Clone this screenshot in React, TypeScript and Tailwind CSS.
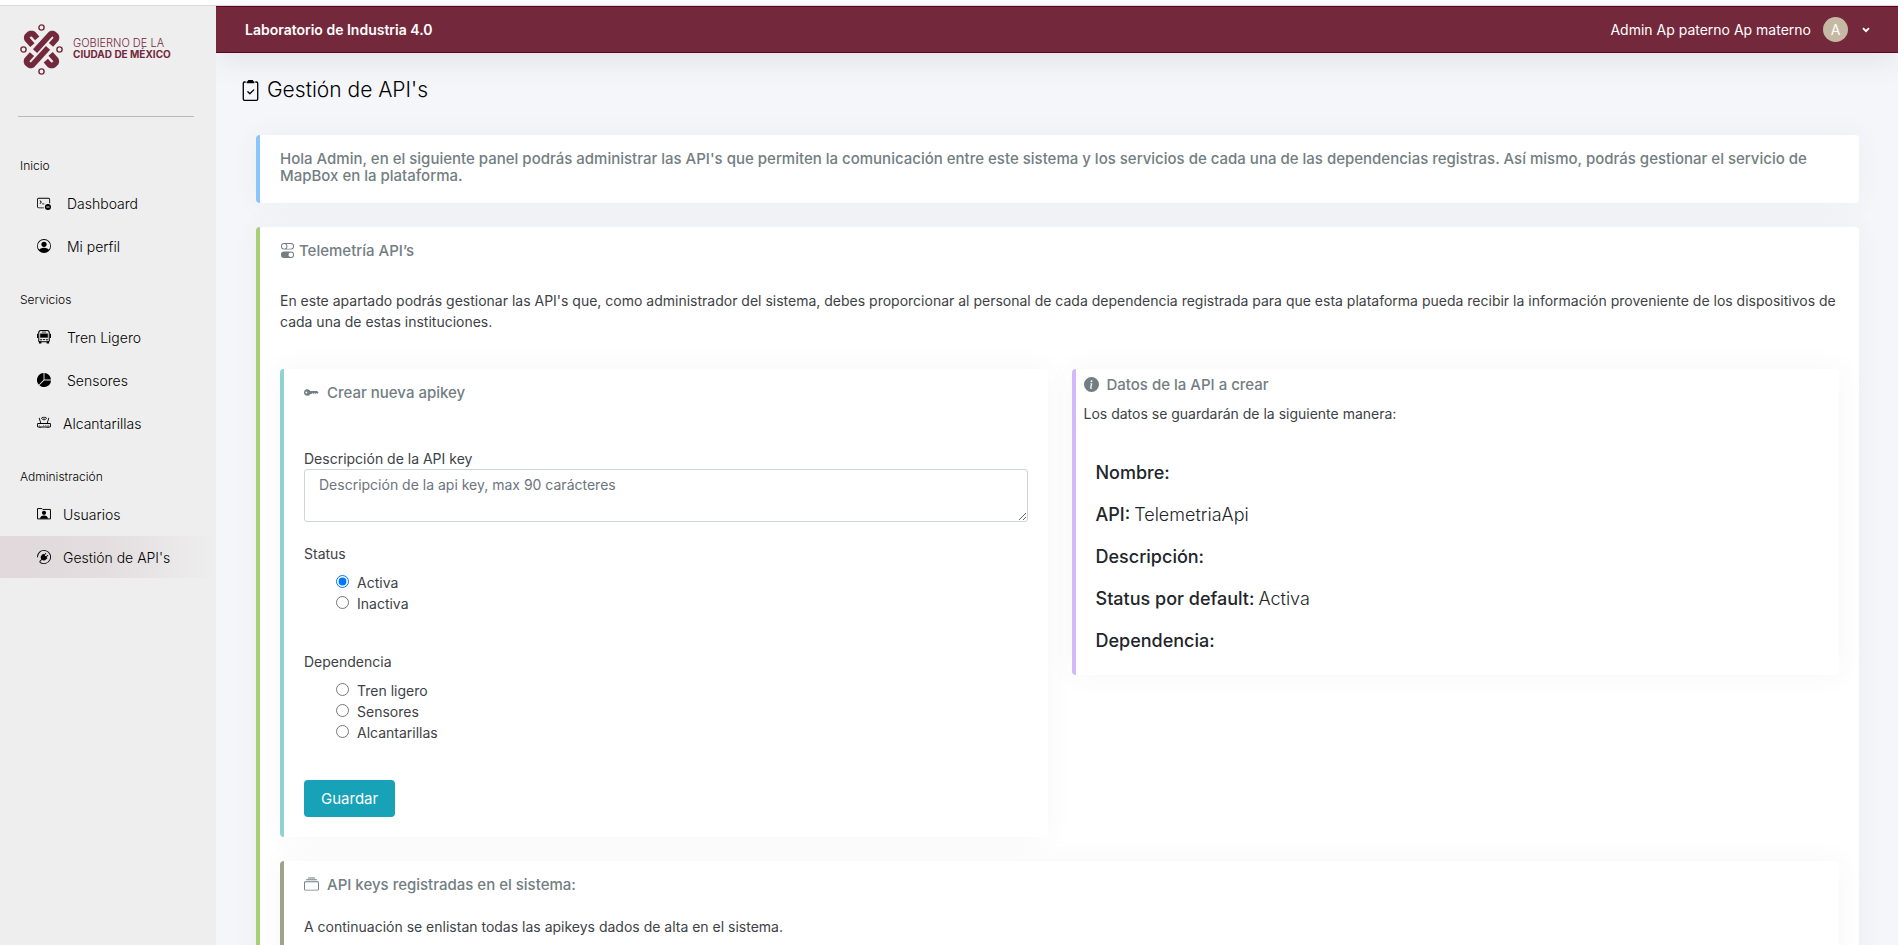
import { useState } from "react";
import type { ComponentType, ReactNode } from "react";
import {
  BsClipboard2Check,
  BsCollection,
  BsInfoCircleFill,
  BsKeyFill,
  BsPersonCircle,
  BsPieChartFill,
  BsPlugin,
  BsRouter,
  BsTerminalDash,
  BsToggles,
} from "react-icons/bs";

type IconProps = { className?: string };
type Icon = ComponentType<IconProps>;
type NavItem = { label: string; icon: Icon; active?: boolean; tight?: boolean };
type NavGroup = { title: string; items: NavItem[] };

function TrainIcon({ className }: IconProps) {
  return (
    <svg viewBox="0 0 16 16" className={className} fill="currentColor" aria-hidden="true">
      <path
        d="M4.5 0.6 H11.5 Q14 0.8 14 3 V12.4 Q14 13.4 13 13.4 H3 Q2 13.4 2 12.4 V3 Q2 0.8 4.5 0.6 Z"
        fill="none"
        stroke="currentColor"
        strokeWidth="1.2"
      />
      <path d="M3.6 4 H12.4 V8.8 H3.6 Z" />
      <path d="M5.5 1.9 H10.5 V2.8 H5.5 Z" />
      <circle cx="4.6" cy="11" r="0.9" />
      <circle cx="11.4" cy="11" r="0.9" />
      <path d="M6.6 10.5 H9.4 V11.5 H6.6 Z" />
      <path d="M0 4.4 H1.2 V9 H0 Z M14.8 4.4 H16 V9 H14.8 Z" />
      <path d="M2.2 13.2 H5 V15.4 H2.2 Z M11 13.2 H13.8 V15.4 H11 Z" />
    </svg>
  );
}

function UserFolderIcon({ className }: IconProps) {
  return (
    <svg viewBox="0 0 16 16" className={className} fill="currentColor" aria-hidden="true">
      <path d="M0.6 13.6 V1.8 H5.6 L6.6 2.8 H15.4 V13.6 Z" fill="none" stroke="currentColor" strokeWidth="1.1" />
      <circle cx="8" cy="6.6" r="2.4" />
      <path d="M3.4 13.4 Q4 9.8 8 9.8 Q12 9.8 12.6 13.4 Z" />
    </svg>
  );
}

const groups: NavGroup[] = [
  {
    title: "Inicio",
    items: [
      { label: "Dashboard", icon: BsTerminalDash },
      { label: "Mi perfil", icon: BsPersonCircle },
    ],
  },
  {
    title: "Servicios",
    items: [
      { label: "Tren Ligero", icon: TrainIcon },
      { label: "Sensores", icon: BsPieChartFill },
      { label: "Alcantarillas", icon: BsRouter, tight: true },
    ],
  },
  {
    title: "Administración",
    items: [
      { label: "Usuarios", icon: UserFolderIcon, tight: true },
      { label: "Gestión de API's", icon: BsPlugin, active: true, tight: true },
    ],
  },
];

function Emblem() {
  return (
    <svg viewBox="0 0 43 51" className="h-[51px] w-[43px] shrink-0" aria-hidden="true">
      <g fill="none" stroke="#74283b" strokeWidth="1.4">
        <circle cx="21.5" cy="3.5" r="2.6" />
        <circle cx="21.5" cy="47.5" r="2.6" />
        <circle cx="3.5" cy="25.5" r="2.6" />
        <circle cx="39.5" cy="25.5" r="2.6" />
      </g>
      <g fill="none" stroke="#74283b" strokeWidth="5.7" strokeLinejoin="bevel">
        <path d="M12.4 21.2 L6.8 14.8 V12.6 L9.6 9.7 H13 L17.2 14.4" />
        <path d="M31 20.8 L36.4 14.8 V12.4 L33.6 9.7 H31 L15 27.2" />
        <path d="M30.6 29.8 L36.2 36.2 V38.4 L33.4 41.3 H30 L25.8 36.6" />
        <path d="M12 30.2 L6.6 36.2 V38.6 L9.4 41.3 H12 L28 23.8" />
      </g>
    </svg>
  );
}

function Sidebar() {
  return (
    <aside className="relative z-10 w-[216px] shrink-0 bg-[#eeeeee] pt-[18px] text-black">
      <a href="#inicio" className="flex items-center gap-2.5 pl-5 text-[#74283b]">
        <Emblem />
        <span className="flex flex-col pb-px text-[10px] leading-[11px]">
          <span className="text-[11px] font-light">GOBIERNO DE LA</span>
          <span className="font-bold">CIUDAD DE MÉXICO</span>
        </span>
      </a>
      <hr className="mt-[41px] mr-[22px] ml-[18px] border-t border-[#b9babc]" />
      <nav className="pt-10">
        {groups.map((g) => (
          <section key={g.title} className="mb-6">
            <h2 className="pl-5 text-[12px] leading-[18px]">{g.title}</h2>
            <ul className="pt-[7px]">
              {g.items.map(({ label, icon: Icon, active, tight }) => (
                <li key={label}>
                  <a
                    href={"#" + label}
                    className={
                      "flex h-[42px] items-center pl-[37px] text-[14px] leading-[21px] " +
                      (tight ? "gap-3 " : "gap-4 ") +
                      (active ? "bg-linear-to-r from-[#e0d8da] via-[#e4dee0] to-[#eeeeee]" : "mb-px")
                    }
                  >
                    <Icon className="size-[14px]" />
                    {label}
                  </a>
                </li>
              ))}
            </ul>
          </section>
        ))}
      </nav>
    </aside>
  );
}

function Header() {
  return (
    <header className="flex h-[47px] items-center justify-between border-y border-[#640028] bg-[#74283b] pr-7 pl-[29px] text-white shadow-[0_8px_32px_rgba(0,0,0,0.08)]">
      <span className="text-[14px] font-semibold">Laboratorio de Industria 4.0</span>
      <button type="button" className="flex items-center gap-3 text-[14px] font-normal">
        Admin Ap paterno Ap materno
        <span className="flex size-[25px] items-center justify-center rounded-full bg-[#c5b9a3]">A</span>
        <svg viewBox="0 0 8 6" className="ml-0.5 h-1.5 w-2" aria-hidden="true">
          <path d="M1 1.2 L4 4.2 L7 1.2" fill="none" stroke="currentColor" strokeWidth="1.9" />
        </svg>
      </button>
    </header>
  );
}

function Card({ accent, className, children }: { accent: string; className: string; children: ReactNode }) {
  return (
    <section className={"rounded-[4px] border-l-4 bg-white shadow-[0_0_28px_rgba(82,85,100,0.05)] " + accent + " " + className}>
      {children}
    </section>
  );
}

function CardTitle({ icon: Icon, children, compact }: { icon: Icon; children: ReactNode; compact?: boolean }) {
  return (
    <h3 className={"flex items-center text-[15px] leading-[17px] font-medium text-[#727e82] " + (compact ? "gap-1" : "gap-2")}>
      <Icon className="size-[15px]" />
      {children}
    </h3>
  );
}

function RadioGroup({ legend, name, options, initial }: { legend: string; name: string; options: string[]; initial?: string }) {
  const [value, setValue] = useState(initial);
  return (
    <fieldset className="text-[14px] leading-[21px]">
      <legend>{legend}</legend>
      <div className="flex flex-col pt-2 pl-8">
        {options.map((o) => (
          <label key={o} className="flex items-center gap-2">
            <input type="radio" name={name} checked={value === o} onChange={() => setValue(o)} className="mb-0.5 size-[13px]" />
            {o}
          </label>
        ))}
      </div>
    </fieldset>
  );
}

const details = [
  ["Nombre:", ""],
  ["API:", "TelemetriaApi"],
  ["Descripción:", ""],
  ["Status por default:", "Activa"],
  ["Dependencia:", ""],
];

export default function App() {
  return (
    <div className="flex h-screen flex-col overflow-hidden bg-[#f5f6fa] font-['Inter','Liberation_Sans',sans-serif] font-light text-[#212529]">
      <div className="h-[5px] shrink-0 bg-white" />
      <div className="flex min-h-0 grow border-t border-[#dcdcdc]">
        <Sidebar />
        <div className="min-w-0 grow">
          <Header />
          <main className="pt-[23px] pr-[39px] pl-10 font-normal text-[#3d4246]">
            <h1 className="-ml-4 flex items-center gap-1.5 text-[21px] leading-7 font-light text-black">
              <BsClipboard2Check className="size-[21px]" />
              Gestión de API's
            </h1>
            <Card accent="border-[#8ac4fa]" className="mt-[31px] px-5 pt-[15px] pb-[19px]">
              <p className="text-[15px] leading-[17px] font-medium text-[#727e82]">
                Hola Admin, en el siguiente panel podrás administrar las API's que permiten la comunicación entre este sistema y
                los servicios de cada una de las dependencias registras. Así mismo, podrás gestionar el servicio de MapBox en la
                plataforma.
              </p>
            </Card>
            <Card accent="border-[#a6cf77]" className="mt-6 px-5 py-[15px]">
              <CardTitle icon={BsToggles} compact>
                Telemetría API’s
              </CardTitle>
              <p className="mt-[31px] text-[14px] leading-[21px]">
                En este apartado podrás gestionar las API's que, como administrador del sistema, debes proporcionar al personal
                de cada dependencia registrada para que esta plataforma pueda recibir la información proveniente de los
                dispositivos de cada una de estas instituciones.
              </p>
              <div className="mt-[37px] grid grid-cols-2 items-start gap-6">
                <Card accent="border-[#90d1d4]" className="px-5 pt-[15px] pb-5">
                  <CardTitle icon={BsKeyFill}>Crear nueva apikey</CardTitle>
                  <form className="flex flex-col" onSubmit={(e) => e.preventDefault()}>
                    <label htmlFor="descripcion" className="mt-[47px] text-[14px] leading-[21px]">
                      Descripción de la API key
                    </label>
                    <textarea
                      id="descripcion"
                      maxLength={90}
                      placeholder="Descripción de la api key, max 90 carácteres"
                      className="h-[53px] w-full resize rounded-[3px] border border-[#ced4da] px-3.5 py-1 text-[14px] leading-[21px] placeholder:text-[#6c757d]"
                    />
                    <div className="mt-[21px]">
                      <RadioGroup legend="Status" name="status" options={["Activa", "Inactiva"]} initial="Activa" />
                    </div>
                    <div className="mt-[37px]">
                      <RadioGroup legend="Dependencia" name="dependencia" options={["Tren ligero", "Sensores", "Alcantarillas"]} />
                    </div>
                    <button type="submit" className="mt-[37px] h-[37px] self-start rounded bg-[#17a2b8] px-[17px] pt-px text-[15px] text-white">
                      Guardar
                    </button>
                  </form>
                </Card>
                <Card accent="border-[#d3b8fb]" className="pt-[7px] pr-5 pb-[22px] pl-2">
                  <CardTitle icon={BsInfoCircleFill}>Datos de la API a crear</CardTitle>
                  <p className="mt-2.5 text-[14px] leading-[21px]">Los datos se guardarán de la siguiente manera:</p>
                  <dl className="mt-[37px] flex flex-col gap-[18px] pl-3 text-[18px] leading-6 text-[#212529]">
                    {details.map(([term, value]) => (
                      <div key={term} className="flex gap-1">
                        <dt className="font-medium">{term}</dt>
                        <dd className="font-light">{value}</dd>
                      </div>
                    ))}
                  </dl>
                </Card>
              </div>
              <Card accent="border-[#9ea38b]" className="mt-6 px-5 pt-[15px] pb-10">
                <CardTitle icon={BsCollection}>API keys registradas en el sistema:</CardTitle>
                <p className="mt-[23px] text-[14px] leading-[21px]">
                  A continuación se enlistan todas las apikeys dados de alta en el sistema.
                </p>
              </Card>
            </Card>
          </main>
        </div>
      </div>
    </div>
  );
}
